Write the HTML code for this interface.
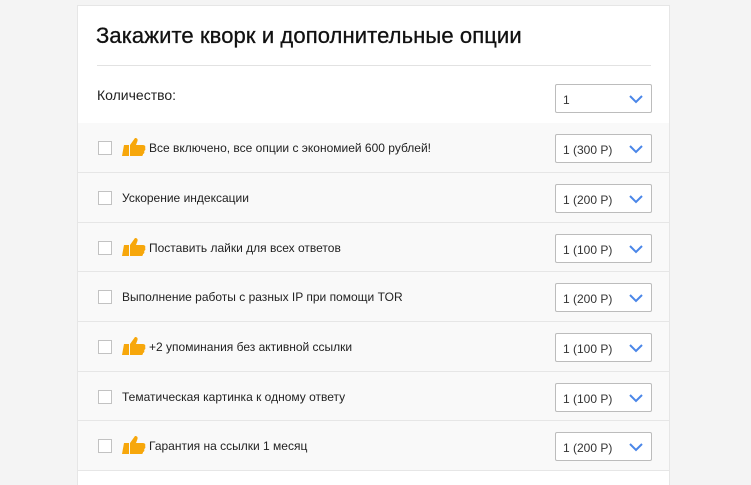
<!DOCTYPE html>
<html><head><meta charset="utf-8"><style>
*{box-sizing:border-box;margin:0;padding:0}
body{width:751px;height:475px;background:#f4f4f4;font-family:"Liberation Sans",sans-serif;overflow:hidden;position:relative}
.card{position:absolute;left:77px;top:5px;width:593px;height:480px;background:#fff;border:1px solid #e6e6e6;border-bottom:none}
h1{position:absolute;left:18px;top:17px;font-size:22px;font-weight:normal;color:#111;letter-spacing:0.1px;-webkit-text-stroke:0.3px #111}
.hr{position:absolute;left:19px;right:18px;top:59px;height:1px;background:#e2e2e2}
.q{position:absolute;left:19px;top:81px;font-size:14px;color:#222}
.sel{position:absolute;left:477px;width:97px;height:29px;border:1px solid #bcbcbc;border-radius:2px;background:#fff;font-size:12px;color:#333;padding:8px 0 0 7px}
.sel svg{position:absolute;right:8px;top:10px}
.row{position:absolute;left:0;right:0;background:#f9f9f9;border-bottom:1px solid #e6e6e6}
.cb{position:absolute;left:20px;top:18px;width:14px;height:14px;border:1px solid #c2c2c2;background:#fff}
.t{position:absolute;left:44px;top:18px;font-size:12px;color:#222}
.t.i{left:71px}
.th{position:absolute;left:44px;top:14px}
.row .sel{top:11px}
</style></head><body>
<div class="card">
<h1>Закажите кворк и дополнительные опции</h1>
<div class="hr"></div>
<div class="q">Количество:</div>
<div class="sel" style="top:78px">1<svg width="14" height="9" viewBox="0 0 14 9"><path d="M1 1l6 6 6-6" stroke="#4a86e8" stroke-width="2" fill="none"/></svg></div>
<div id="rows"></div>
</div>
<script>
var d=[[1,"Все включено, все опции с экономией 600 рублей!","300"],[0,"Ускорение индексации","200"],[1,"Поставить лайки для всех ответов","100"],[0,"Выполнение работы с разных IP при помощи TOR","200"],[1,"+2 упоминания без активной ссылки","100"],[0,"Тематическая картинка к одному ответу","100"],[1,"Гарантия на ссылки 1 месяц","200"]];
var h="";var th='<svg class="th" width="24" height="20" viewBox="0 0 24 20"><path d="M2 8h5v11H0z" fill="#f7a70b"/><path d="M8 8l5-7c2 0 3 1 2.5 3L14 8h7c2 0 3 2 2 3 1 1 0 3-1 3 1 1 0 3-1 3 0 2-1 2-2 2H8z" fill="#f7a70b"/></svg>';
var tops=[117,167,217,266,316,366,415,465];
d.forEach(function(r,i){h+='<div class="row" style="top:'+tops[i]+'px;height:'+(tops[i+1]-tops[i])+'px"><div class="cb"></div>'+(r[0]?th:'')+'<div class="t'+(r[0]?' i':'')+'">'+r[1]+'</div><div class="sel">1 ('+r[2]+' Р)<svg width="14" height="9" viewBox="0 0 14 9"><path d="M1 1l6 6 6-6" stroke="#4a86e8" stroke-width="2" fill="none"/></svg></div></div>';});
document.getElementById("rows").innerHTML=h;
</script>
</body></html>
